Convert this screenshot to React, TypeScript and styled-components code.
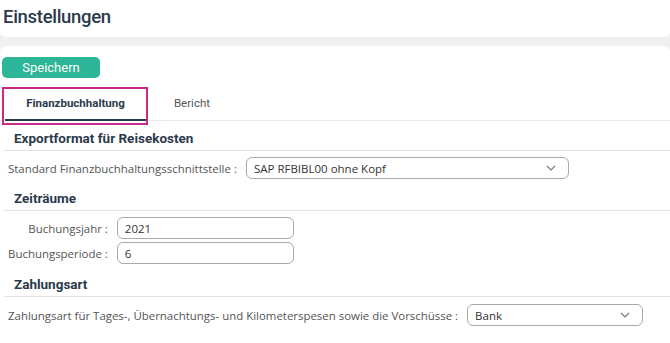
import React from 'react';
import styled, { createGlobalStyle } from 'styled-components';

const GlobalStyle = createGlobalStyle`
  html, body {
    margin: 0;
    padding: 0;
    background: #f0f0f0;
  }
  body {
    font-family: "Open Sans", "Liberation Sans", sans-serif;
    color: #555;
  }
`;

const Page = styled.div`
  width: 670px;
  height: 343px;
  overflow: hidden;
  display: flex;
  flex-direction: column;
  gap: 9px;
`;

const Header = styled.header`
  background: #fff;
  height: 37px;
  border-radius: 0 0 6px 6px;
  padding-left: 3px;
  display: flex;
  align-items: center;
`;

const Title = styled.h1`
  margin: 0;
  font-family: Roboto, "Liberation Sans", sans-serif;
  font-weight: 500;
  font-size: 18.5px;
  letter-spacing: -0.3px;
  color: #2b3a4b;
  margin-top: -3px;
`;

const Card = styled.main`
  position: relative;
  flex: 1;
  background: #fff;
  border-radius: 6px 6px 0 0;
  padding-top: 11px;
`;

const Toolbar = styled.div`
  padding-left: 2px;
  display: flex;
`;

const SaveButton = styled.button`
  width: 98px;
  height: 21px;
  border: none;
  border-radius: 5px;
  background: #2cb596;
  color: #fff;
  font-family: Roboto, "Liberation Sans", sans-serif;
  font-size: 13px;
  padding: 0;
  cursor: pointer;
`;

const TabBar = styled.nav`
  margin-top: 9px;
  display: flex;
  padding-left: 5px;
  border-bottom: 1px solid #ebebeb;
`;

const Tab = styled.div<{ $active?: boolean; $width: number }>`
  width: ${p => p.$width}px;
  height: 32px;
  display: flex;
  align-items: center;
  justify-content: center;
  font-family: Roboto, "Liberation Sans", sans-serif;
  font-size: 11.5px;
  font-weight: ${p => (p.$active ? 700 : 400)};
  color: ${p => (p.$active ? '#2b3a4b' : '#555')};
  border-bottom: 2px solid ${p => (p.$active ? '#2b3a4b' : 'transparent')};
  margin-bottom: -1px;
`;

const Highlight = styled.div`
  position: absolute;
  left: 2px;
  top: 41px;
  width: 146px;
  height: 38px;
  box-sizing: border-box;
  border: 2px solid #c92a86;
  pointer-events: none;
`;

const Section = styled.section`
  margin-left: 4px;
`;

const SectionTitle = styled.h2`
  margin: 0;
  height: 30px;
  box-sizing: border-box;
  padding: 0 0 3px 10px;
  display: flex;
  align-items: flex-end;
  font-family: Roboto, "Liberation Sans", sans-serif;
  font-size: 13.5px;
  line-height: 18px;
  font-weight: 700;
  color: #2b3a4b;
  border-bottom: 1px solid #e2e2e2;
`;

const SectionBody = styled.div<{ $pt?: number; $pb?: number }>`
  padding: ${p => p.$pt ?? 6}px 0 ${p => p.$pb ?? 2}px 4px;
`;

const FieldGrid = styled.div`
  display: grid;
  grid-template-columns: auto auto;
  justify-content: start;
  column-gap: 9px;
  row-gap: 3px;
  align-items: center;
`;

const Label = styled.label`
  justify-self: end;
  font-size: 11.45px;
  color: #555;
  white-space: nowrap;
`;

const Field = styled.div<{ $width: number }>`
  width: ${p => p.$width}px;
  height: 22px;
  box-sizing: border-box;
  border: 1px solid #a9a9a9;
  border-radius: 6px;
  padding: 0 12px 0 7px;
  display: flex;
  align-items: center;
  justify-content: space-between;
  font-size: 11.5px;
  color: #333;
`;

const Chevron = () => (
  <svg width="10" height="6" viewBox="0 0 10 6" fill="none">
    <path d="M1 1l4 4 4-4" stroke="#777" strokeWidth="1.1" />
  </svg>
);

export default function App() {
  return (
    <>
      <GlobalStyle />
      <Page>
        <Header>
          <Title>Einstellungen</Title>
        </Header>
        <Card>
          <Toolbar>
            <SaveButton>Speichern</SaveButton>
          </Toolbar>
          <TabBar>
            <Tab $active $width={141}>Finanzbuchhaltung</Tab>
            <Tab $width={92}>Bericht</Tab>
          </TabBar>
          <Highlight />

          <Section>
            <SectionTitle>Exportformat für Reisekosten</SectionTitle>
            <SectionBody>
              <FieldGrid>
                <Label>Standard Finanzbuchhaltungsschnittstelle :</Label>
                <Field $width={323}>
                  <span>SAP RFBIBL00 ohne Kopf</span>
                  <Chevron />
                </Field>
              </FieldGrid>
            </SectionBody>
          </Section>

          <Section>
            <SectionTitle>Zeiträume</SectionTitle>
            <SectionBody $pb={3}>
              <FieldGrid>
                <Label>Buchungsjahr :</Label>
                <Field $width={177}>2021</Field>
                <Label>Buchungsperiode :</Label>
                <Field $width={177}>6</Field>
              </FieldGrid>
            </SectionBody>
          </Section>

          <Section>
            <SectionTitle>Zahlungsart</SectionTitle>
            <SectionBody $pt={7}>
              <FieldGrid>
                <Label>Zahlungsart für Tages-, Übernachtungs- und Kilometerspesen sowie die Vorschüsse :</Label>
                <Field $width={176}>
                  <span>Bank</span>
                  <Chevron />
                </Field>
              </FieldGrid>
            </SectionBody>
          </Section>
        </Card>
      </Page>
    </>
  );
}
